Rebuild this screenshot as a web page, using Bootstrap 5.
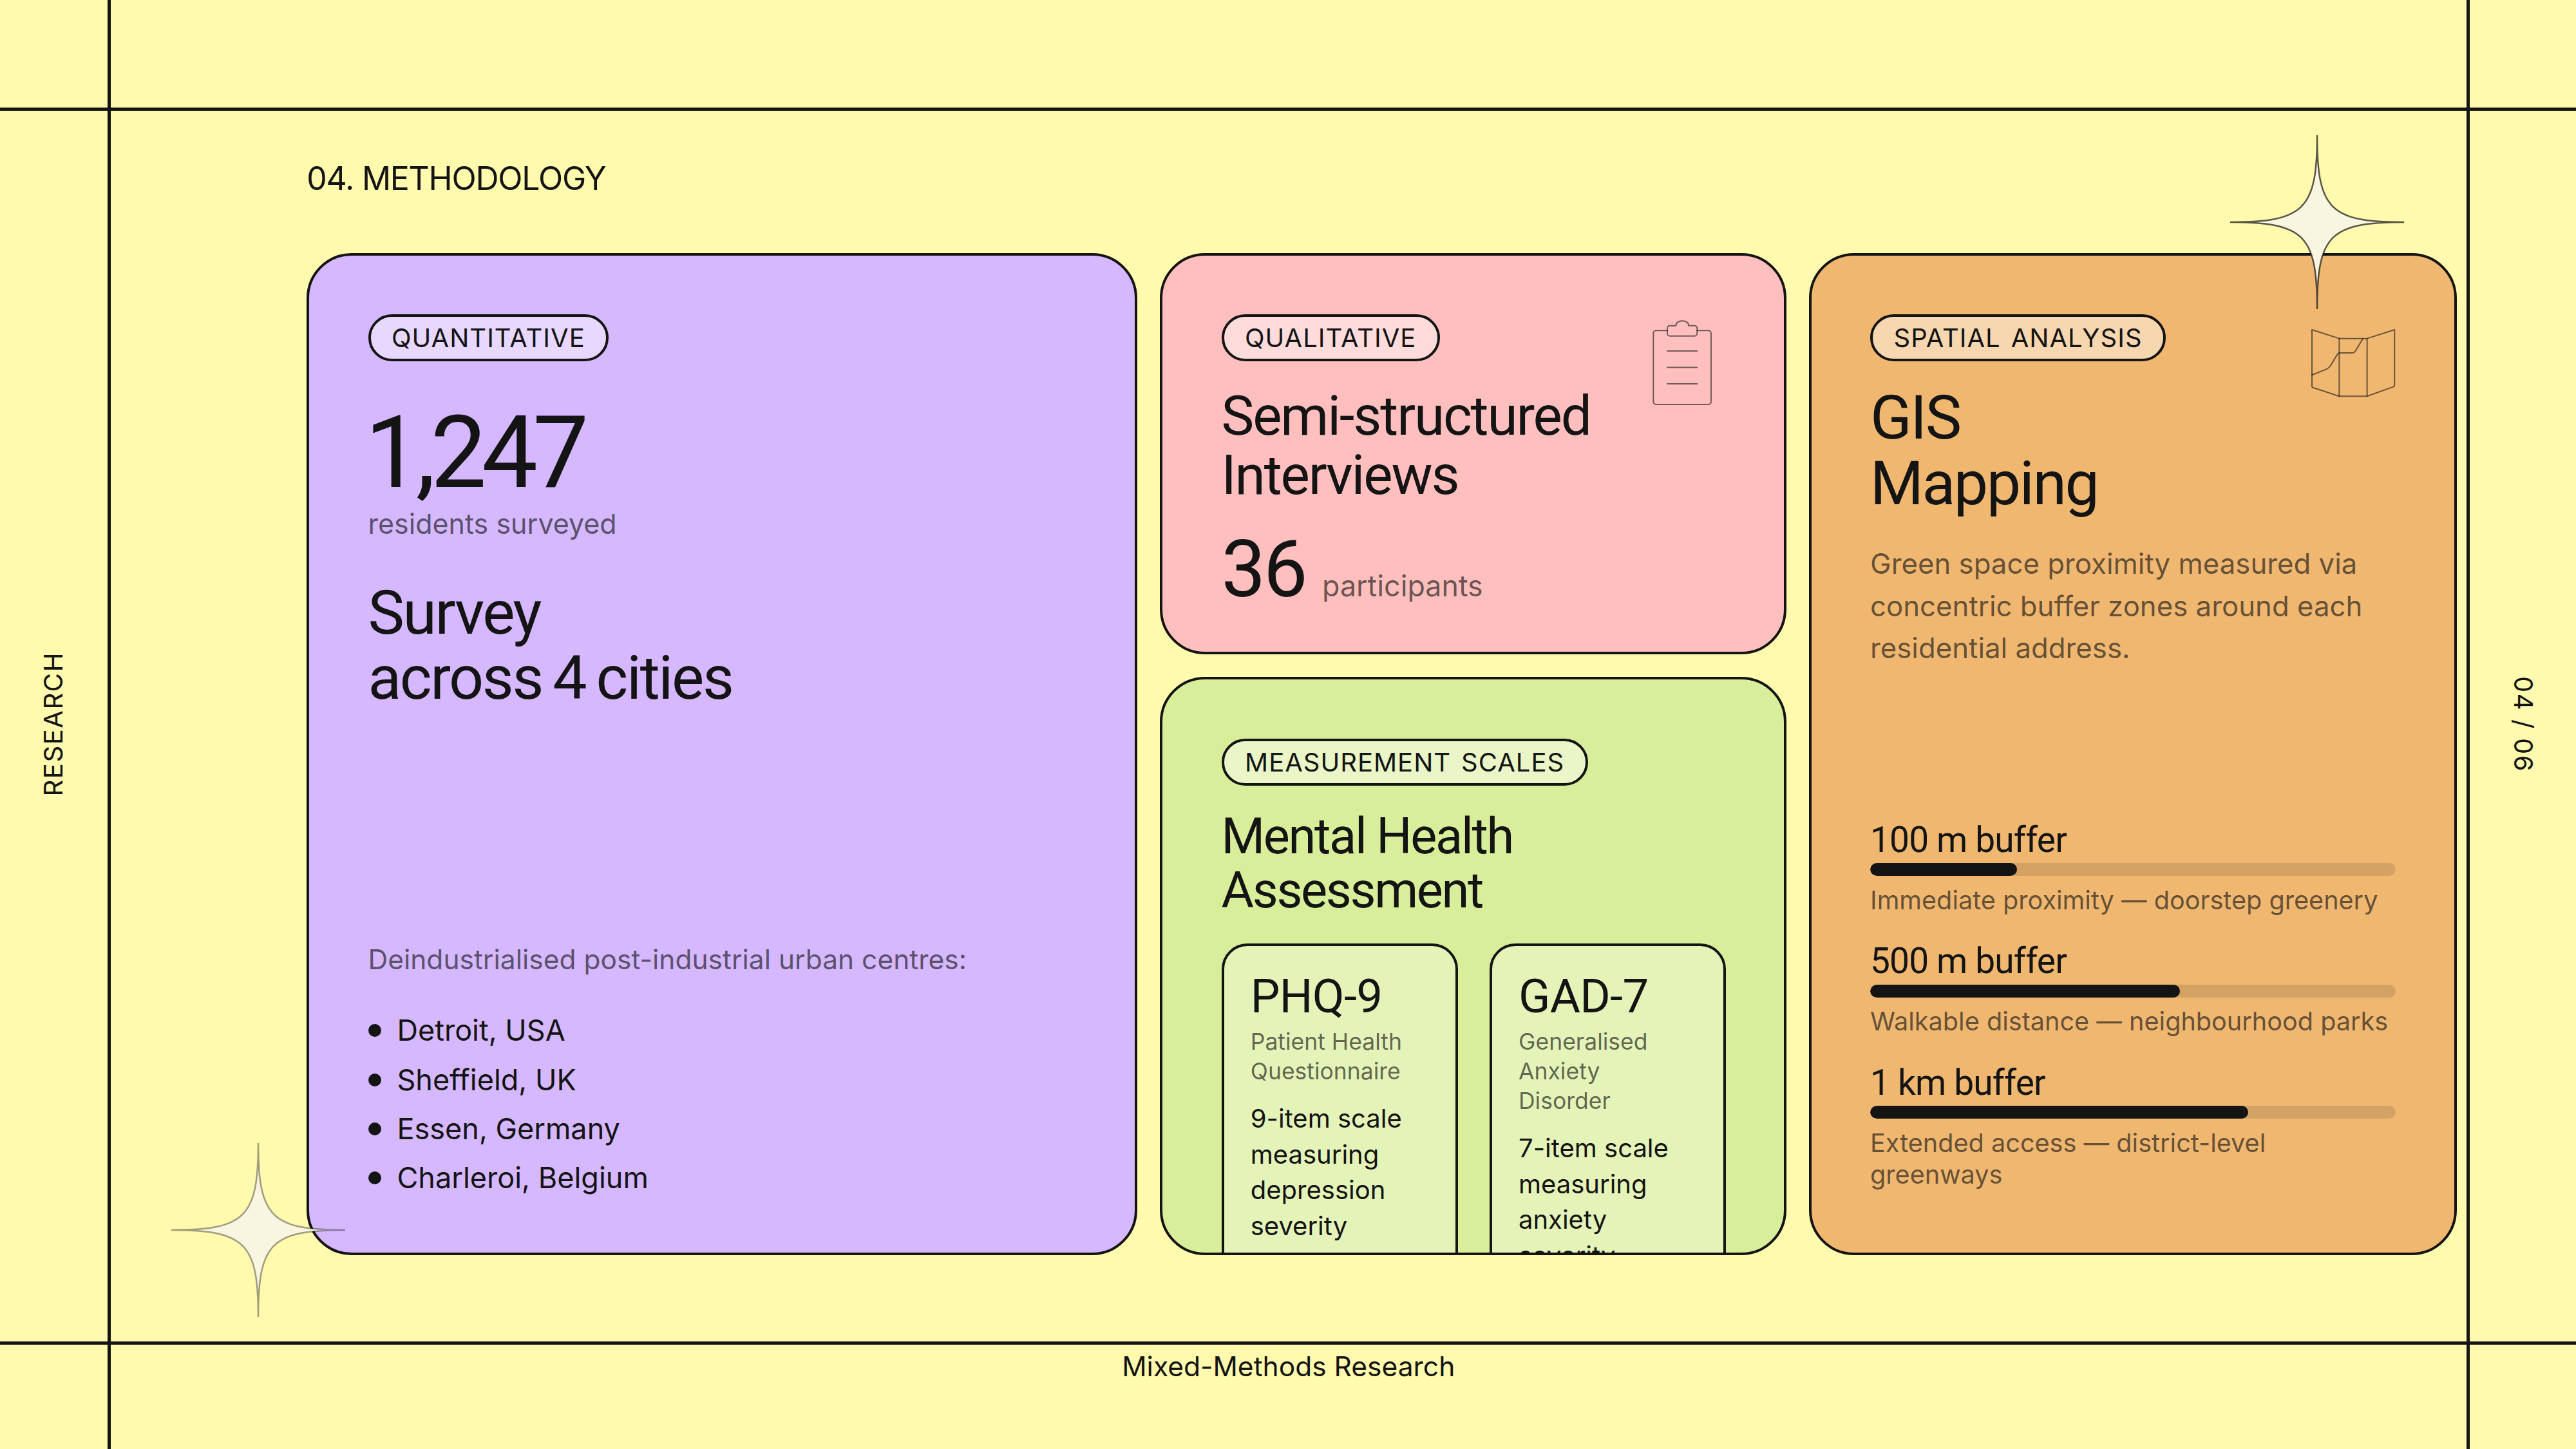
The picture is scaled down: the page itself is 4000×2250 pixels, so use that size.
<!DOCTYPE html>
<html lang="en">
<head>
  <meta charset="UTF-8">
  <title>Methodology</title>
  <link href="https://cdn.jsdelivr.net/npm/bootstrap@5.3.2/dist/css/bootstrap.min.css" rel="stylesheet">
  <style>
    html { zoom: 2.5; }
    body { background: #fffaad; color: #141414; font-family: "Inter", "Liberation Sans", sans-serif; overflow: hidden; }
    .slide { width: 1600px; height: 900px; display: grid; grid-template-columns: 68.6px 1fr 68px; grid-template-rows: 68.6px 764.4px 67px; }
    .edge-b { border-bottom: 2px solid #141414; }
    .edge-t { border-top: 2px solid #141414; }
    .edge-r { border-right: 2px solid #141414; }
    .edge-l { border-left: 2px solid #141414; }
    .rail-cell { padding-bottom: 2px; }
    .side-text { writing-mode: vertical-rl; font-size: 16px; letter-spacing: .04em; }
    .side-left { transform: rotate(180deg); }
    .foot-text { font-size: 17px; line-height: 27.5px; }
    .content { padding-left: 121.9px; padding-right: 6px; }
    .page-title { font-size: 20px; line-height: 26px; font-weight: 400; margin: 29.4px 0 33px; letter-spacing: -.025em; }
    .panels { display: grid; grid-template-columns: 516px 389px 402.5px; grid-template-rows: 249.5px 359px; gap: 14px; }
    .panel { display: flex; flex-direction: column; border: 1.6px solid #141414; border-radius: 28px; overflow: hidden; padding: 36.5px; color: #141414; background: none; }
    .panel-big { grid-row: span 2; background: #d5b8ff; padding-bottom: 31px; }
    .panel-pink { background: #ffbfbf; }
    .panel-green { background: #d9ee9a; }
    .panel-orange { grid-row: 1 / 3; grid-column: 3; background: #f0b770; padding-bottom: 38.5px; }
    .tag { align-self: flex-start; border: 1.6px solid #141414; background: rgba(255,255,255,.45); color: #141414; font-size: 16px; font-weight: 400; line-height: 26px; padding: 0 13px; letter-spacing: .025em; word-spacing: 1.5px; }
    .head { font-family: "Roboto", "Inter", sans-serif; font-weight: 400; letter-spacing: -.02em; margin: 0; }
    .big-num { font-size: 62px; line-height: 62px; letter-spacing: -.05em; margin: 26px 0 0 -2px; }
    .muted { color: rgba(20,20,20,.65); }
    .unit { font-size: 17px; line-height: 26px; }
    .unit-wide { font-size: 17.2px; }
    .unit-lg { font-size: 17.9px; }
    .head-lg { font-size: 38px; line-height: 40.5px; letter-spacing: -.025em; word-spacing: -2px; }
    .head-md { font-size: 34.2px; line-height: 36.7px; letter-spacing: -.025em; }
    .head-sm { font-size: 31px; line-height: 33.6px; letter-spacing: -.03em; }
    .survey-head { margin-top: 22px; }
    .gis-head { margin-top: 15px; }
    .pink-head { margin-top: 16px; }
    .green-head { margin-top: 15px; }
    .places { font-size: 18px; line-height: 30.5px; margin: 0; }
    .places li { display: flex; align-items: center; gap: 10px; }
    .dot { width: 8px; height: 8px; border-radius: 50%; background: #141414; }
    .num-md { font-size: 49px; line-height: 48px; letter-spacing: -.03em; }
    .num-row { gap: 10.5px; margin-top: 16px; }
    .scale-row { display: grid; grid-template-columns: 147px 147px; gap: 19.5px; }
    .sub-card { border: 1.6px solid #141414; border-radius: 16px; background: rgba(255,255,255,.3); padding: 16.5px; height: 260px; }
    .sub-title { font-size: 29px; line-height: 30px; letter-spacing: -.01em; }
    .sub-name { font-size: 14.2px; line-height: 18.3px; margin-top: 4px; }
    .sub-text { font-size: 16px; line-height: 22.2px; margin-top: 9px; }
    .body-copy { font-size: 17.5px; line-height: 26.2px; margin: 17px 0 0; }
    .buf-name { font-size: 22px; line-height: 24px; margin-bottom: 2.5px; letter-spacing: -.015em; }
    .buf-track { height: 8px; border-radius: 4px; background: rgba(20,20,20,.12); }
    .buf-track .progress-bar { background: #141414; border-radius: 4px; }
    .buf-text { font-size: 15.85px; line-height: 19.5px; margin-top: 5.5px; }
    .corner-icon { position: absolute; fill: none; stroke: #141414; stroke-opacity: .6; stroke-width: 6; stroke-linecap: round; stroke-linejoin: round; }
    .clip-icon { width: 39.3px; height: 55.3px; right: 43.5px; top: 39px; }
    .map-icon { width: 55.3px; height: 45.3px; right: 35px; top: 44px; }
    .spark { position: absolute; width: 108px; height: 108px; pointer-events: none; }
    .spark path { fill: #f8f6e0; stroke: #141414; stroke-width: 1; }
    .spark-top { left: 1385px; top: 84px; }
    .spark-top path { stroke-opacity: .7; }
    .spark-bottom { left: 106.5px; top: 710px; }
    .spark-bottom path { stroke-opacity: .4; }
  </style>
</head>
<body>
  <div class="slide position-relative">
    <div class="edge-b edge-r"></div>
    <div class="edge-b"></div>
    <div class="edge-b edge-l"></div>

    <div class="edge-r rail-cell d-flex align-items-center justify-content-center"><span class="side-text side-left">RESEARCH</span></div>

    <main class="content">
      <h1 class="page-title">04. METHODOLOGY</h1>
      <div class="panels">
        <!-- Quantitative -->
        <section class="card panel panel-big">
          <span class="badge rounded-pill tag">QUANTITATIVE</span>
          <div class="head big-num">1,247</div>
          <div class="muted unit unit-wide">residents surveyed</div>
          <h2 class="head head-lg survey-head">Survey<br>across 4 cities</h2>
          <div class="mt-auto">
            <p class="muted unit mb-3">Deindustrialised post-industrial urban centres:</p>
            <ul class="list-unstyled places">
              <li><span class="dot"></span>Detroit, USA</li>
              <li><span class="dot"></span>Sheffield, UK</li>
              <li><span class="dot"></span>Essen, Germany</li>
              <li><span class="dot"></span>Charleroi, Belgium</li>
            </ul>
          </div>
        </section>

        <!-- Qualitative -->
        <section class="card panel panel-pink position-relative">
          <span class="badge rounded-pill tag">QUALITATIVE</span>
          <svg class="corner-icon clip-icon" viewBox="130 70 295 415">
            <path d="M208 128H155a12 12 0 0 0-12 12V460a12 12 0 0 0 12 12H400a12 12 0 0 0 12-12V140a12 12 0 0 0-12-12H347"/>
            <path d="M220 105H248C248 75 308 75 308 105H335a12 12 0 0 1 12 12V141a12 12 0 0 1-12 12H220a12 12 0 0 1-12-12V117a12 12 0 0 1 12-12Z"/>
            <path d="M208 223H347M208 300H347M208 376H347"/>
          </svg>
          <h2 class="head head-md pink-head">Semi-structured<br>Interviews</h2>
          <div class="d-flex align-items-baseline num-row">
            <span class="head num-md">36</span><span class="muted unit unit-lg">participants</span>
          </div>
        </section>

        <!-- Spatial -->
        <section class="card panel panel-orange position-relative">
          <span class="badge rounded-pill tag">SPATIAL ANALYSIS</span>
          <svg class="corner-icon map-icon" viewBox="75 47 415 340">
            <path d="M90 62L217 103H347L475 62V320a8 8 0 0 1-6 8L347 372H217L96 332a8 8 0 0 1-6-8Z"/>
            <path d="M217 103V372M347 103V372"/>
            <path d="M90 273L155 247Q168 242 176 230L208 178Q212 170 222 170H278Q288 170 293 160L328 103"/>
          </svg>
          <h2 class="head head-lg gis-head">GIS<br>Mapping</h2>
          <p class="body-copy muted">Green space proximity measured via concentric buffer zones around each residential address.</p>
          <div class="mt-auto d-flex flex-column gap-3">
            <div>
              <div class="head buf-name">100 m buffer</div>
              <div class="progress buf-track"><div class="progress-bar" style="width: 28%"></div></div>
              <div class="muted buf-text">Immediate proximity — doorstep greenery</div>
            </div>
            <div>
              <div class="head buf-name">500 m buffer</div>
              <div class="progress buf-track"><div class="progress-bar" style="width: 59%"></div></div>
              <div class="muted buf-text">Walkable distance — neighbourhood parks</div>
            </div>
            <div>
              <div class="head buf-name">1 km buffer</div>
              <div class="progress buf-track"><div class="progress-bar" style="width: 72%"></div></div>
              <div class="muted buf-text">Extended access — district-level greenways</div>
            </div>
          </div>
        </section>

        <!-- Scales -->
        <section class="card panel panel-green">
          <span class="badge rounded-pill tag">MEASUREMENT SCALES</span>
          <h2 class="head head-sm green-head">Mental Health<br>Assessment</h2>
          <div class="scale-row mt-3">
            <div class="sub-card">
              <div class="head sub-title">PHQ-9</div>
              <div class="sub-name muted">Patient Health Questionnaire</div>
              <div class="sub-text">9-item scale measuring depression severity</div>
            </div>
            <div class="sub-card">
              <div class="head sub-title">GAD-7</div>
              <div class="sub-name muted">Generalised Anxiety Disorder</div>
              <div class="sub-text">7-item scale measuring anxiety severity</div>
            </div>
          </div>
        </section>
      </div>
    </main>

    <div class="edge-l rail-cell d-flex align-items-center justify-content-center"><span class="side-text">04 / 06</span></div>

    <div class="edge-t edge-r"></div>
    <div class="edge-t text-center foot-text">Mixed-Methods Research</div>
    <div class="edge-t edge-l"></div>

    <svg class="spark spark-top" viewBox="0 0 108 108"><path d="M54 0C54 46 62 54 108 54C62 54 54 62 54 108C54 62 46 54 0 54C46 54 54 46 54 0Z"/></svg>
    <svg class="spark spark-bottom" viewBox="0 0 108 108"><path d="M54 0C54 46 62 54 108 54C62 54 54 62 54 108C54 62 46 54 0 54C46 54 54 46 54 0Z"/></svg>
  </div>
  <script src="https://cdn.jsdelivr.net/npm/bootstrap@5.3.2/dist/js/bootstrap.bundle.min.js"></script>
</body>
</html>
